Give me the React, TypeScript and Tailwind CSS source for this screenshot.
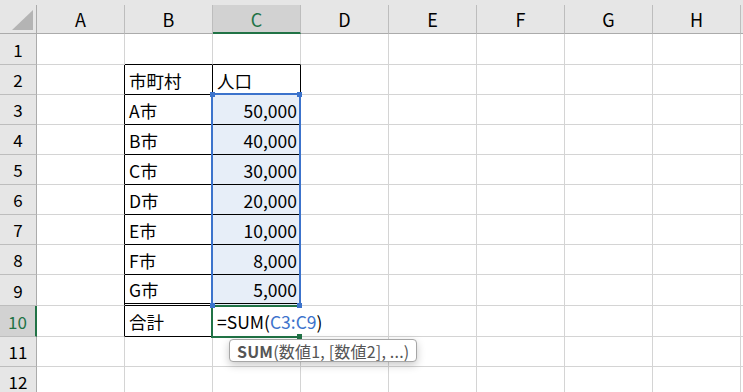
import React from 'react';

const COLS = ['A', 'B', 'C', 'D', 'E', 'F', 'G', 'H', 'I'];
const ROWS = [1, 2, 3, 4, 5, 6, 7, 8, 9, 10, 11, 12];

const data: Record<number, [string, string]> = {
  2: ['市町村', '人口'],
  3: ['A市', '50,000'],
  4: ['B市', '40,000'],
  5: ['C市', '30,000'],
  6: ['D市', '20,000'],
  7: ['E市', '10,000'],
  8: ['F市', '8,000'],
  9: ['G市', '5,000'],
  10: ['合計', ''],
};

const font = "font-['Noto_Sans_CJK_JP','Noto_Sans',sans-serif]";

function rowHeight(r: number) {
  return r === 1 || r === 9 || r === 10 ? 'h-[31px]' : 'h-[30px]';
}

function cellBorder(r: number, c: string) {
  const inTable = (c === 'B' || c === 'C') && r >= 2 && r <= 10;
  if (inTable && r === 9) return 'border-r border-b-[3px] border-double border-black';
  if (c === 'C' && r === 10) return 'border-b border-r border-b-black border-r-transparent';
  if (inTable) return 'border-r border-b border-black';
  if (c === 'A' && r >= 2 && r <= 10) return 'border-r border-b border-r-black border-b-[#d4d4d4]';
  if (r === 1 && (c === 'B' || c === 'C')) return 'border-r border-b border-r-[#d4d4d4] border-b-black';
  return 'border-r border-b border-[#d4d4d4]';
}

function Cell({ r, c }: { r: number; c: string }) {
  const row = data[r];
  let content: React.ReactNode = null;
  let align = 'justify-start pl-[4px]';
  if (row && c === 'B') content = row[0];
  if (row && c === 'C') {
    if (r === 10) {
      content = (
        <span className="relative z-20 whitespace-nowrap">
          =SUM(<span className="text-[#3c73cc]">C3:C9</span>)
        </span>
      );
    } else {
      content = row[1];
      if (r >= 3) align = 'justify-end pr-[3px]';
    }
  }
  const fill = c === 'C' && r >= 3 && r <= 9 ? 'bg-[#e7eef8]' : 'bg-white';
  return (
    <div
      className={`w-[88px] shrink-0 flex items-center pt-[2px] text-[17.5px] leading-none text-black overflow-visible ${align} ${fill} ${cellBorder(r, c)}`}
    >
      {content}
    </div>
  );
}

export default function App() {
  return (
    <div className={`relative w-[743px] h-[392px] overflow-hidden bg-white ${font}`}>
      {/* Column headers */}
      <div className="h-[34px] bg-[#e6e6e6] pt-[5px] flex">
        <div className="w-[37px] shrink-0 h-[29px] border-r border-b border-[#ababab] flex items-end justify-end">
          <svg width="36" height="28" viewBox="0 0 36 28">
            <polygon points="12,25 33,25 33,5" fill="#b4b4b4" />
          </svg>
        </div>
        {COLS.map((c) => (
          <div
            key={c}
            className={`w-[88px] shrink-0 h-[29px] border-r border-[#bdbdbd] flex items-center justify-center text-[18px] leading-none ${
              c === 'C'
                ? 'bg-[#d2d2d2] border-b-2 border-b-[#217346] text-[#217346]'
                : 'border-b border-b-[#ababab] text-black'
            }`}
          >
            {c === 'I' ? '' : c}
          </div>
        ))}
      </div>

      {/* Rows */}
      {ROWS.map((r) => (
        <div key={r} className={`flex ${rowHeight(r)}`}>
          <div
            className={`w-[37px] shrink-0 flex items-center justify-center text-[17px] leading-none border-b border-b-[#bdbdbd] ${
              r === 10
                ? 'bg-[#d2d2d2] border-r-2 border-r-[#217346] text-[#217346]'
                : 'bg-[#e6e6e6] border-r border-r-[#ababab] text-black'
            }`}
          >
            {r}
          </div>
          {COLS.map((c) => (
            <Cell key={c} r={r} c={c} />
          ))}
        </div>
      ))}

      {/* Range highlight C3:C9 */}
      <div className="absolute left-[211px] top-[93px] w-[90px] h-[214px] border-2 border-[#3c73cc] pointer-events-none" />
      <div className="absolute left-[210px] top-[92px] w-[5px] h-[5px] bg-[#3c73cc]" />
      <div className="absolute left-[297px] top-[92px] w-[5px] h-[5px] bg-[#3c73cc]" />

      {/* Active cell C10 */}
      <div className="absolute left-[211px] top-[305px] w-[90px] h-[33px] border-2 border-r-0 border-[#217346] pointer-events-none" />
      <div className="absolute left-[210px] top-[303px] w-[5px] h-[5px] bg-[#3c73cc]" />
      <div className="absolute left-[297px] top-[303px] w-[5px] h-[5px] bg-[#3c73cc]" />
      <div className="absolute left-[297px] top-[334px] w-[5px] h-[5px] bg-[#217346]" />

      {/* Function tooltip */}
      <div className="absolute left-[229px] top-[339px] h-[23px] px-[7px] flex items-center rounded-[4px] border border-[#a6a6a6] bg-white shadow-[0_3px_8px_rgba(0,0,0,0.22)] text-[16px] tracking-[0.2px] leading-none text-[#555] whitespace-nowrap">
        <span className="font-bold">SUM</span>(数値1, [数値2], ...)
      </div>
    </div>
  );
}
